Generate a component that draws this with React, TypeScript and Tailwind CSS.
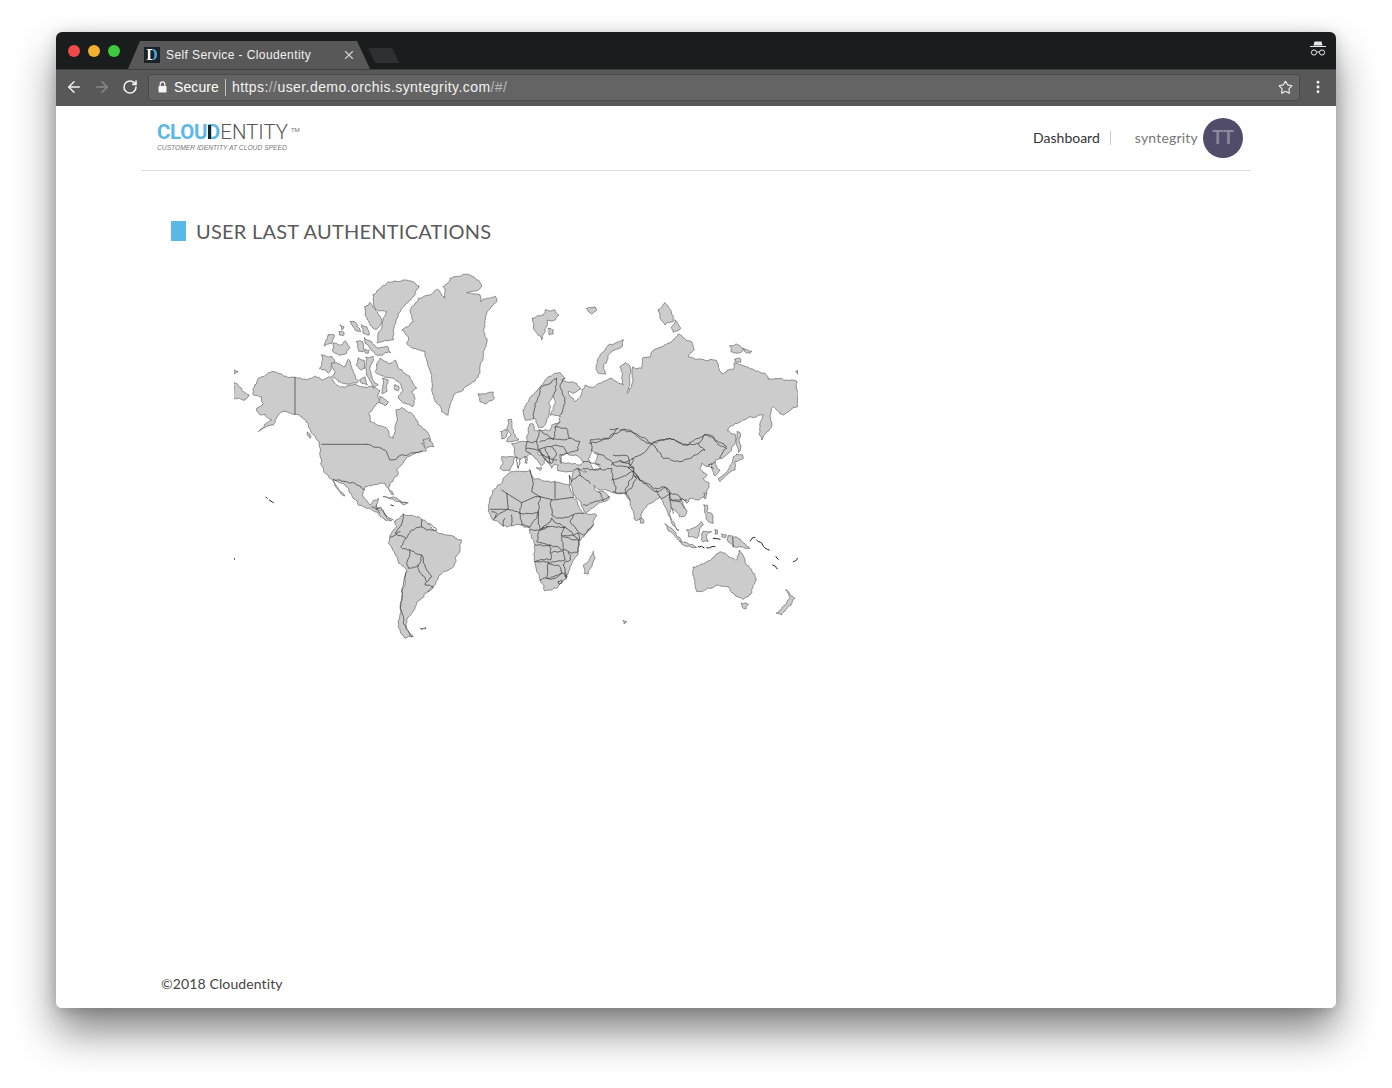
import React from 'react';
import { ArrowLeft, ArrowRight, EllipsisVertical, RotateCw, Star, X } from 'lucide-react';

// Map outlines are traced from 3x crops, so each helper takes the crop's own coordinates.
type Pt = [number, number];

const at = (ox: number, oy: number) => (s: string): Pt[] =>
  s
    .trim()
    .split(/\s+/)
    .map((p) => {
      const [x, y] = p.split(',').map(Number);
      return [ox + x / 3, oy + y / 3] as Pt;
    });

const A = at(230, 270); // north west
const B = at(510, 270); // north east
const C = at(230, 450); // south west
const D = at(480, 450); // south east
const E = at(495, 400); // europe
const F = at(620, 420); // east asia

// The traced points are sparse, so break long edges up to get a coast that looks like a coast.
let seed = 12345;
const rand = () => {
  seed = (seed * 16807) % 2147483647;
  return seed / 2147483647 - 0.5;
};

const jag = (a: Pt, b: Pt, out: Pt[]) => {
  const dx = b[0] - a[0];
  const dy = b[1] - a[1];
  const len = Math.hypot(dx, dy);
  if (len < 2.2) {
    out.push(b);
    return;
  }
  const k = rand() * Math.min(0.34, 2.4 / len);
  const mid: Pt = [(a[0] + b[0]) / 2 - dy * k, (a[1] + b[1]) / 2 + dx * k];
  jag(a, mid, out);
  jag(mid, b, out);
};

const rough = (pts: Pt[], close: boolean) => {
  const list = close ? [...pts, pts[0]] : pts;
  const out: Pt[] = [list[0]];
  for (let i = 1; i < list.length; i++) jag(list[i - 1], list[i], out);
  return out;
};

const toPath = (pts: Pt[]) => 'M' + pts.map((p) => `${p[0].toFixed(1)},${p[1].toFixed(1)}`).join(' L');

const closed = (...parts: Pt[][]) => toPath(rough(parts.flat(), true)) + ' Z';
const open = (...parts: Pt[][]) => toPath(rough(parts.flat(), false));
const straight = (...parts: Pt[][]) => toPath(parts.flat());

const land: string[] = [
  // North America
  closed(
    A('75,345 95,320 125,305 195,322 225,328 255,318 275,330 300,320 320,345 345,352 380,345 405,352 430,350 450,362 445,385 455,395 440,400 415,430 420,455 470,475 478,500 490,505 495,470 500,440 497,420 515,412 545,430 565,465 595,490 610,530 575,520'),
    C('590,2 560,8 545,16 525,30 500,60 505,70 480,100 475,115 490,135 480,125 465,100 430,105 405,110 400,140 420,165 440,150 445,145 435,170 455,180 470,205 485,212 465,210 440,185 415,175 385,165 365,135 345,105 310,88 345,138 325,120 305,88 285,70 272,40 272,0'),
    A('268,515 245,490 235,460 215,440 195,433 170,425 150,430 130,465 85,485 125,450 105,432 90,435 80,415 100,400 95,380 70,375'),
  ),
  // Greenland and the arctic islands
  closed(A('640,50 660,25 700,12 730,20 755,45 745,60 710,68 750,75 752,95 795,78 800,95 770,130 765,200 772,210 760,260 750,300 745,320 700,360 670,375 655,435 635,425 612,385 605,335 600,300 585,245 530,220 535,200 515,180 550,155 540,125 565,85 610,68 620,58 645,85')),
  closed(A('430,75 475,35 530,30 568,48 555,75 530,100 505,130 498,150 490,210 440,218 445,190 460,150 470,125 440,120 430,95')),
  closed(A('405,110 420,97 440,125 455,155 440,178 420,165 405,135')),
  closed(A('362,155 380,160 392,185 375,180')),
  closed(A('395,165 410,170 418,195 400,190')),
  closed(A('330,165 342,170 335,180')),
  closed(A('328,185 342,187 340,197 328,195')),
  closed(A('295,195 313,195 305,220 283,228')),
  closed(A('310,220 335,225 345,212 360,232 350,250 325,255 307,240')),
  closed(A('380,215 398,215 400,245 385,243')),
  closed(A('403,203 425,215 440,232 475,232 482,248 440,255 420,235 405,220')),
  closed(A('405,238 418,240 415,250 405,248')),
  closed(A('275,255 305,258 315,275 295,310 268,295')),
  closed(A('305,280 345,290 355,268 365,290 385,335 365,340 325,335 305,320 315,305')),
  closed(A('385,265 402,270 405,295 395,300 378,285')),
  closed(A('408,262 430,260 420,300 428,330 445,345 430,355 410,315 405,290')),
  closed(A('390,330 405,320 412,345 395,340')),
  closed(A('440,285 450,265 475,280 495,270 505,295 540,320 560,355 545,365 555,385 548,410 525,400 505,385 520,360 510,340 490,325 450,315 435,305')),
  closed(A('458,325 475,330 470,365 455,370')),
  closed(A('495,345 507,350 505,362 495,360')),
  closed(A('450,380 475,395 465,408 450,400')),
  closed(A('580,510 595,505 610,530 590,535')),
  closed(A('232,487 243,500 240,505 232,495')),
  closed(A('12,338 35,360 58,375 45,390 12,385')),
  closed(A('12,300 25,305 12,312')),
  // Iceland, Britain, Ireland
  closed(A('745,372 790,367 793,385 765,402 750,395')),
  closed(E('40,60 50,58 55,90 72,118 50,125 35,125 48,105 38,90')),
  closed(E('18,95 34,88 35,110 20,117')),
  // Svalbard and the Russian islands
  closed(B('68,145 100,135 105,120 135,120 147,135 135,150 112,150 105,185 95,210 80,190')),
  closed(B('115,175 130,180 130,192 118,195')),
  closed(B('230,115 255,110 260,120 245,133 235,125')),
  closed(B('340,210 338,225 300,250 280,285 288,313 265,310 258,295 270,255 295,225')),
  closed(B('445,120 465,98 475,110 490,155 465,165 450,145')),
  closed(B('495,150 512,175 490,187 485,170')),
  closed(B('660,228 680,222 700,240 680,250 663,245')),
  closed(B('700,235 725,243 718,250 703,243')),
  closed(B('675,268 690,265 692,277 675,275')),
  closed(B('858,305 863,300 863,313')),
  // Eurasia
  closed(
    B('40,420 50,400 90,350 115,320 150,308 165,325 155,330 200,340 212,358 190,370 175,365 195,395 215,372 225,345 240,352 270,340 305,325 340,345 330,290 345,278 358,285 362,310 360,345 352,370 365,345 368,290 395,295 397,265 420,262 425,245 470,222 490,210 505,192 520,205 545,215 553,240 535,260 575,268 620,272 635,310 670,298 672,280 715,292 765,310 775,328 815,325 862,335 862,410 820,435 790,410 780,440 785,460 755,510 748,495 750,460 760,435 720,440 675,460 652,482'),
    F('345,42 348,65 330,95 300,115 285,125 300,150 285,168 275,145 275,130 265,140 245,130 240,145 262,165 250,175 268,190 255,225 235,240'),
    D('628,145 620,160 607,145 600,150 620,180 612,200 598,200 590,185 575,175 568,190 580,215 597,240 590,240 575,220 565,195 558,175 545,150 540,140 525,150 500,170 490,180 482,205 468,212 455,175 440,140 430,128 400,128 375,118 355,118 342,105 352,125 372,125 388,140 375,155 350,165 318,188 305,170 283,135 272,105 275,92 280,65 295,55'),
    E('275,215 245,208 225,215 188,212 190,195 180,192 170,205 160,190 145,165 130,155 128,160 150,178 148,190 140,197 125,178 108,162 95,170 75,178 62,172 55,190 45,212 25,212 15,205 25,190 20,170 65,172 50,130 75,125 95,125 100,100 105,72 115,72 118,90 135,90 165,92 170,75 195,65 195,48 165,45 180,10 175,-15 163,5 163,40 155,60 145,80 130,82 120,55 90,60 85,30'),
  ),
  // Japan, Sakhalin, Taiwan
  closed(F('352,35 360,38 362,75 355,98 350,70')),
  closed(F('350,103 368,105 370,115 345,125 345,150 320,165 300,185 295,175 320,155 335,130 340,110')),
  closed(F('252,220 260,218 258,235 252,235')),
  closed(E('125,204 140,203 135,212')),
  closed(E('90,170 97,172 96,190 90,188')),
  // Africa
  closed(D('30,145 40,120 65,100 75,80 100,65 150,60 160,85 225,95 268,105 280,140 310,190 350,195 340,225 300,270 295,310 270,350 260,385 230,415 195,423 180,390 165,340 165,285 150,250 150,235 120,225 70,228 40,210 25,185 28,160')),
  closed(D('340,305 345,325 325,372 312,370 310,345 330,325')),
  // South America
  closed(C('495,215 520,192 565,200 575,210 620,245 695,270 690,300 665,355 630,375 610,410 585,430 560,460 545,490 530,510 530,535 550,560 525,565 505,530 510,470 530,365 500,320 475,280 480,255 500,230')),
  closed(C('572,535 587,531 587,537 574,539')),
  closed(C('460,140 490,140 530,158 500,155 475,145')),
  closed(C('510,155 535,158 520,165')),
  // Oceania and south east Asia
  closed(D('640,352 680,335 720,305 745,318 770,330 778,300 800,345 828,385 815,430 790,448 762,432 745,410 715,405 690,415 650,425 645,395 638,375')),
  closed(D('785,460 805,462 798,478 790,475')),
  closed(D('918,420 945,445 925,470 905,495 888,490 920,460 930,445')),
  closed(D('745,258 775,265 810,295 780,290 760,290 740,270')),
  closed(D('620,240 650,230 665,215 670,225 650,265 625,260')),
  closed(D('555,222 575,235 605,275 595,270 570,245')),
  closed(D('600,275 640,285 650,292 610,285')),
  closed(D('670,245 695,245 680,255 685,275 668,275')),
  closed(D('672,165 682,165 680,185 695,190 700,220 685,215 678,195')),
  closed(D('480,205 490,208 490,220 482,220')),
  closed(D('430,512 440,515 432,522')),
  closed(D('705,240 712,240 712,252 705,252')),
  closed(D('725,252 740,256 735,264 725,260')),
];

const seas: string[] = [
  closed(E('195,165 215,160 250,170 265,185 250,195 210,190 195,185')),
  closed(E('290,150 310,160 300,185 318,205 295,210 280,175')),
];

const borders: string[] = [
  // North America
  straight(A('195,322 195,433')),
  straight(A('275,523 410,523')),
  open(A('410,523 470,545 480,570'), C('480,30 520,15 545,8 575,3')),
  open(C('310,88 345,95 375,100 402,118')),
  // Central America
  open(C('425,170 440,180 452,172 465,195 490,210')),
  open(C('440,165 450,190')),
  // South America
  open(C('520,192 515,225 495,250 528,265 545,240 575,230 575,210')),
  open(C('575,230 590,240 620,240 595,220')),
  open(C('528,265 512,290 540,300 530,340 535,355 565,345 575,315 540,300')),
  open(C('480,262 510,245')),
  open(C('575,315 590,360 605,380 590,395 572,370 565,345')),
  open(C('530,365 515,440 520,520 545,560')),
  open(C('590,395 585,405 610,410 595,425')),
  // Scandinavia and Europe
  open(B('125,335 95,350 75,400 70,445')),
  open(B('125,335 140,325 130,375')),
  open(B('165,325 150,350 165,400 150,435')),
  open(E('195,65 180,82 215,85 225,115 255,125 250,150 215,160')),
  open(E('180,82 175,118 135,90 125,125 95,125 92,150 108,162')),
  open(E('135,125 175,118 225,115')),
  open(E('125,125 130,150 170,140 205,140 215,160 198,165 198,190')),
  open(E('95,145 135,150 150,178 170,190 185,165 170,140')),
  open(E('135,150 140,165 165,170 165,190')),
  open(E('150,145 160,175 185,180')),
  open(E('65,172 70,205 75,178')),
  open(E('265,185 290,190 315,195')),
  // Russia, Kazakhstan, China
  open(B('238,520 300,505 345,478 378,490 425,522 480,505 535,525 590,492 625,515 650,530')),
  open(E('290,150 285,120 340,115 370,85 345,88')),
  open(F('95,72 150,55 195,72 235,70 255,90 225,105 180,125 130,115 95,72')),
  open(F('235,70 255,42 280,50 295,75 320,85 300,115')),
  open(F('0,30 40,38 65,60 95,72 70,100 40,115 20,125 0,125')),
  open(F('40,115 25,145 40,140 60,180 100,205 130,200 150,215 155,240 200,240')),
  open(F('60,180 40,165 30,180 15,215 30,240')),
  open(F('285,125 265,135 280,145')),
  // Middle East, central and south Asia
  open(D('310,55 345,60 395,55 405,125')),
  open(D('395,90 460,65 440,50 400,45 370,15 345,10')),
  open(D('400,125 440,130 470,85 460,65')),
  open(D('295,55 300,75 330,100')),
  open(D('300,75 275,92')),
  open(D('310,165 370,150 388,140')),
  open(D('355,125 370,150')),
  open(D('395,45 420,30 450,45 445,20 400,15')),
  open(D('450,45 490,100 525,125 555,110 570,130 545,145')),
  open(D('570,130 570,150 580,190')),
  open(D('570,130 600,140 615,175')),
  open(D('570,150 600,155')),
  open(D('528,120 540,140')),
  straight(D('270,105 268,75 275,95')),
  // Africa
  straight(D('150,60 160,100 155,125 180,140')),
  straight(D('225,95 225,145')),
  straight(D('180,140 220,150 280,142')),
  open(D('215,150 215,195 230,205 280,195')),
  straight(D('65,120 80,130 125,158 165,140 180,140')),
  straight(D('80,130 85,178 30,178')),
  open(D('125,158 120,190 175,185 180,140')),
  open(D('120,190 125,225 150,232 175,185 180,240 215,205')),
  open(D('40,210 60,190 85,178 120,190')),
  open(D('95,195 95,225')),
  open(D('75,205 70,228')),
  open(D('35,185 50,190 45,205')),
  open(D('150,240 180,240')),
  open(D('215,205 255,232 205,230 185,240 190,230')),
  open(D('205,230 180,240 170,275 210,285 250,300 245,265 255,230')),
  open(D('280,195 270,215 310,255 340,225')),
  open(D('310,190 280,195')),
  open(D('255,232 300,270 295,250 248,258')),
  open(D('248,258 295,270 295,305 265,305 250,300')),
  open(D('165,285 210,285 212,330 165,335')),
  open(D('212,310 250,305 255,330 205,340')),
  open(D('165,335 205,335 200,385 180,390')),
  open(D('205,340 235,345 245,370 205,385')),
  open(D('265,305 272,330 255,335 250,345 258,385')),
  open(D('200,385 225,385 245,370 255,370')),
  closed(D('235,395 245,390 245,400 237,403')),
  closed(D('255,375 262,378 258,383')),
  // Border on New Guinea
  straight(D('758,262 760,290')),
];

const flecks: string[] = [
  straight(C('108,142 112,145')),
  straight(C('118,150 130,158')),
  straight(C('13,325 13,328')),
  open(D('810,272 825,262')),
  open(D('830,270 868,300')),
  open(D('888,320 895,328')),
  open(D('878,345 892,357')),
  open(D('940,335 952,325')),
  open(D('655,290 672,293')),
  open(D('680,293 705,290')),
  open(D('700,265 720,268')),
  open(C('483,165 490,167')),
];

const WorldMap = () => (
  <svg viewBox="234 270 564 370" className="block h-[370px] w-[564px]" strokeLinejoin="round" strokeLinecap="round">
    <g fill="#cccccc" stroke="#666666" strokeWidth="0.7">
      {land.map((d, i) => (
        <path key={i} d={d} />
      ))}
    </g>
    <g fill="#ffffff" stroke="#666666" strokeWidth="0.7">
      {seas.map((d, i) => (
        <path key={i} d={d} />
      ))}
    </g>
    <g fill="none" stroke="#333333" strokeWidth="0.7">
      {borders.map((d, i) => (
        <path key={i} d={d} />
      ))}
    </g>
    <g fill="none" stroke="#222222" strokeWidth="1">
      {flecks.map((d, i) => (
        <path key={i} d={d} />
      ))}
    </g>
  </svg>
);

const IncognitoIcon = () => (
  <svg width="16" height="18" viewBox="0 0 16 18" fill="none">
    <path d="M4.5 0.5h7l1 4h-9z" fill="#e8e8e8" />
    <path d="M0 5.5h16" stroke="#e8e8e8" strokeWidth="1.2" />
    <circle cx="4" cy="11.5" r="2.6" stroke="#e8e8e8" strokeWidth="1" />
    <circle cx="12" cy="11.5" r="2.6" stroke="#e8e8e8" strokeWidth="1" />
    <path d="M6.6 11h2.8" stroke="#e8e8e8" strokeWidth="1" />
  </svg>
);

const PadlockIcon = () => (
  <svg width="9" height="12" viewBox="0 0 9 12" fill="none">
    <path d="M2.2 5.5V3.2a2.3 2.3 0 0 1 4.6 0v2.3" stroke="#f5f5f5" strokeWidth="1.2" />
    <rect x="0.5" y="5" width="8" height="6.5" rx="0.8" fill="#f5f5f5" />
  </svg>
);

const ChromeBar = () => (
  <>
    <div className="flex h-[37px] items-end bg-[#1a1d1e]">
      <div className="flex h-[37px] items-center gap-2 self-start pt-[1px] pl-3">
        <span className="h-3 w-3 rounded-full bg-[#ee4b49]" />
        <span className="h-3 w-3 rounded-full bg-[#f0b030]" />
        <span className="h-3 w-3 rounded-full bg-[#3ec93e]" />
      </div>
      <div className="ml-2 flex h-[28px] w-[242px] items-center bg-[#585858] pl-4 [clip-path:polygon(0_100%,12px_0,229px_0,100%_100%)]">
        <span className="flex h-4 w-4 items-center justify-center bg-[#1d2226]">
          <span className="bg-[linear-gradient(90deg,#ffffff_50%,#4aa8e0_50%)] bg-clip-text font-['Liberation_Serif',serif] text-[16px] leading-none font-bold text-transparent">
            D
          </span>
        </span>
        <span className="ml-[6px] font-['Liberation_Sans',sans-serif] text-[12px] tracking-[0.4px] whitespace-nowrap text-[#f2f2f2]">
          Self Service - Cloudentity
        </span>
        <X size={14} strokeWidth={2} className="ml-[31px] text-[#d0d0d0]" />
      </div>
      <div className="mb-[6px] -ml-[2px] h-[15px] w-[31px] bg-[#2e3032] [clip-path:polygon(0_0,24px_0,100%_100%,7px_100%)]" />
      <div className="mb-[10px] ml-auto pr-[10px]">
        <IncognitoIcon />
      </div>
    </div>
    <div className="flex h-[37px] items-center border-t border-[#3d3d3d] bg-[#585858] pb-[2px] font-['Liberation_Sans',sans-serif]">
      <ArrowLeft size={18} strokeWidth={2} className="ml-[9px] text-[#f0f0f0]" />
      <ArrowRight size={18} strokeWidth={2} className="ml-[10px] text-[#8a8a8a]" />
      <RotateCw size={16} strokeWidth={2.4} className="ml-[11px] text-[#f0f0f0]" />
      <div className="ml-[10px] flex h-[27px] w-[1152px] items-center rounded-[3px] border border-[#4a4a4a] bg-[#646464] pr-[6px] pl-[9px]">
        <PadlockIcon />
        <span className="ml-[7px] text-[14px] tracking-[0.1px] text-white">Secure</span>
        <span className="ml-[6px] h-[17px] w-px bg-[#bdbdbd]" />
        <span className="ml-[6px] text-[14px] tracking-[0.43px] whitespace-nowrap text-[#f2f2f2]">
          https:<span className="text-[#b8b8b8]">//</span>user.demo.orchis.syntegrity.com<span className="text-[#b8b8b8]">/#/</span>
        </span>
        <Star size={15} strokeWidth={1.8} className="ml-auto text-[#f0f0f0]" />
      </div>
      <EllipsisVertical size={16} strokeWidth={2.4} className="ml-[10px] text-[#f0f0f0]" />
    </div>
  </>
);

const Logo = () => (
  <div className="pt-[15px] pl-[16px]">
    <div className="flex items-start font-['Roboto',sans-serif] text-[20.4px] leading-[22px] whitespace-nowrap">
      <span className="font-bold tracking-[-0.3px] text-[#5bb8e6]">CLOU</span>
      <span className="relative font-bold text-[#5bb8e6]">
        D
        <span className="absolute top-[4px] bottom-[4px] left-[1px] w-[3px] bg-[#222222]" />
      </span>
      <span className="font-light text-[#555555]">ENTITY</span>
      <span className="mt-[-2px] ml-[3px] text-[6px] text-[#777777]">TM</span>
    </div>
    <div className="mt-[1px] font-['Liberation_Sans',sans-serif] text-[6.7px] leading-[8px] whitespace-nowrap text-[#777777] italic">
      CUSTOMER IDENTITY AT CLOUD SPEED
    </div>
  </div>
);

export default function App() {
  return (
    <div className="h-[1088px] w-[1392px] overflow-hidden bg-white pt-[32px] pl-[56px] font-['Lato',sans-serif]">
      <div className="flex h-[976px] w-[1280px] flex-col overflow-hidden rounded-[6px] shadow-[0_24px_42px_rgba(0,0,0,0.48),0_2px_14px_rgba(0,0,0,0.18)]">
        <ChromeBar />
        <div className="flex flex-1 flex-col bg-white">
          <header className="ml-[85px] flex h-[65px] w-[1110px] justify-between border-b border-[#dddddd]">
            <Logo />
            <nav className="flex items-center pr-2 pb-[1px] text-[14px]">
              <a className="text-[#333333]">Dashboard</a>
              <span className="ml-[10px] h-[14px] w-px bg-[#cccccc]" />
              <span className="ml-6 tracking-[0.2px] text-[#777777]">syntegrity</span>
              <span className="ml-[5px] flex h-10 w-10 items-center justify-center rounded-full bg-[#524c6b] text-[18px] font-bold text-[#8e8a9e]">
                TT
              </span>
            </nav>
          </header>
          <main className="flex-1 pt-[50px] pl-[115px]">
            <h1 className="flex items-center gap-[10px] text-[20px] leading-[20px] tracking-[0.24px] text-[#5a5a5a]">
              <span className="h-5 w-[15px] bg-[#5bb8e6]" />
              USER LAST AUTHENTICATIONS
            </h1>
            <div className="mt-[29px] ml-[63px]">
              <WorldMap />
            </div>
          </main>
          <footer className="pb-[14px] pl-[105px] text-[14px] leading-[20px] tracking-[0.12px] text-[#444444]">©2018 Cloudentity</footer>
        </div>
      </div>
    </div>
  );
}
